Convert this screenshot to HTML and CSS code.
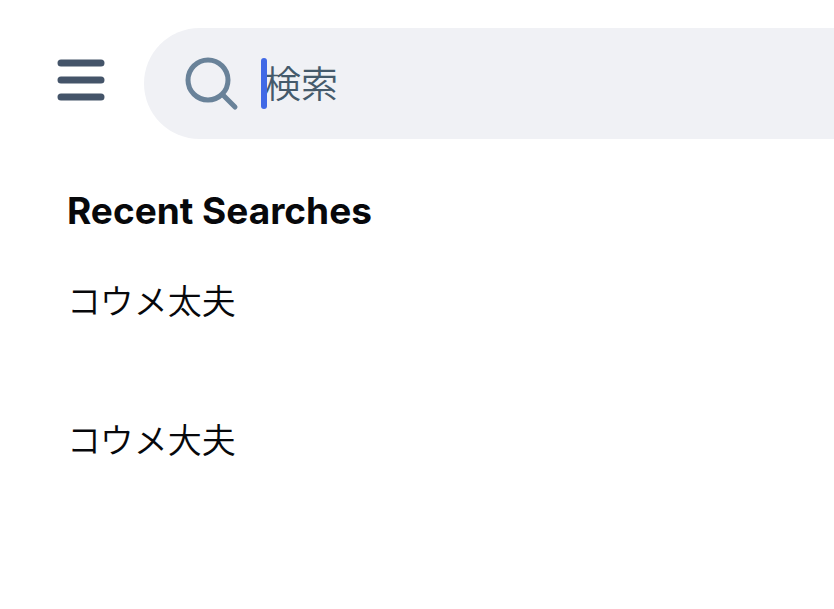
FILE: index.html
```html
<!DOCTYPE html>
<html lang="ja">
  <head>
    <meta charset="utf-8">
    <meta name="viewport" content="width=device-width, initial-scale=1">
    <title>検索</title>
    <link rel="stylesheet" href="styles.css">
  </head>

  <body>
    <header class="topbar">
      <button type="button" class="menu-button" aria-label="Menu">
        <svg width="48" height="42" viewBox="0 0 48 42" fill="none" stroke="#445469" stroke-width="7" stroke-linecap="round">
          <path d="M4 4H44M4 21H44M4 38H44"/>
        </svg>
      </button>
      <form class="search" role="search">
        <label class="search-icon" for="searchInput" aria-label="検索">
          <svg width="54" height="54" viewBox="0 0 54 54" fill="none" stroke="#698299" stroke-width="5" stroke-linecap="round">
            <circle cx="23" cy="23" r="20"/>
            <path d="M38 38L50 50"/>
          </svg>
        </label>
        <span class="caret"></span>
        <input type="text" class="search-input" id="searchInput" name="searchInput" placeholder="検索">
      </form>
    </header>

    <main class="recent">
      <h1 class="recent-title">Recent Searches</h1>
      <ul class="recent-list">
        <li><a class="recent-link" href="#">コウメ太夫</a></li>
        <li><a class="recent-link" href="#">コウメ大夫</a></li>
      </ul>
    </main>
  </body>
</html>
```
FILE: styles.css
```css
body {
  margin: 0;
  background: #fff;
  color: #07080b;
  font-family: Inter, "Noto Sans CJK JP", sans-serif;
}

.topbar {
  display: flex;
  align-items: center;
  gap: 39px;
  padding: 28px 0 0 57px;
}

.menu-button {
  display: flex;
  flex: none;
  padding: 0 0 8px;
  border: none;
  background: none;
}

.search {
  display: flex;
  flex: 1;
  align-items: center;
  height: 111px;
  padding-left: 41px;
  border-radius: 56px 0 0 56px; /* runs off the right edge */
  background: #f0f1f5;
}

.search-icon {
  display: flex;
  flex: none;
  margin-right: 22px;
}

/* drawn over the start of the placeholder */
.caret {
  z-index: 1;
  flex: none;
  width: 6px;
  height: 51px;
  border-radius: 3px;
  background: #4169e6;
}

.search-input {
  flex: 1;
  min-width: 0;
  margin-left: -3px;
  padding: 0 0 4px;
  border: none;
  outline: none;
  background: none;
  font-family: "Noto Sans CJK JP", sans-serif;
  font-size: 37px;
  font-weight: 350;
}

.search-input::placeholder {
  color: #455a6b;
  opacity: 1;
}

.recent {
  padding: 48px 67px;
}

.recent-title {
  margin: 0;
  font-size: 37px;
  font-weight: 700;
  line-height: 48px;
}

.recent-list {
  margin: 0;
  padding: 0;
  list-style: none;
}

.recent-link {
  display: block;
  padding: 41px 0 50px;
  color: inherit;
  font-family: "Noto Sans CJK JP", sans-serif;
  font-size: 34px;
  font-weight: 350;
  line-height: 48px;
  text-decoration: none;
}
```
